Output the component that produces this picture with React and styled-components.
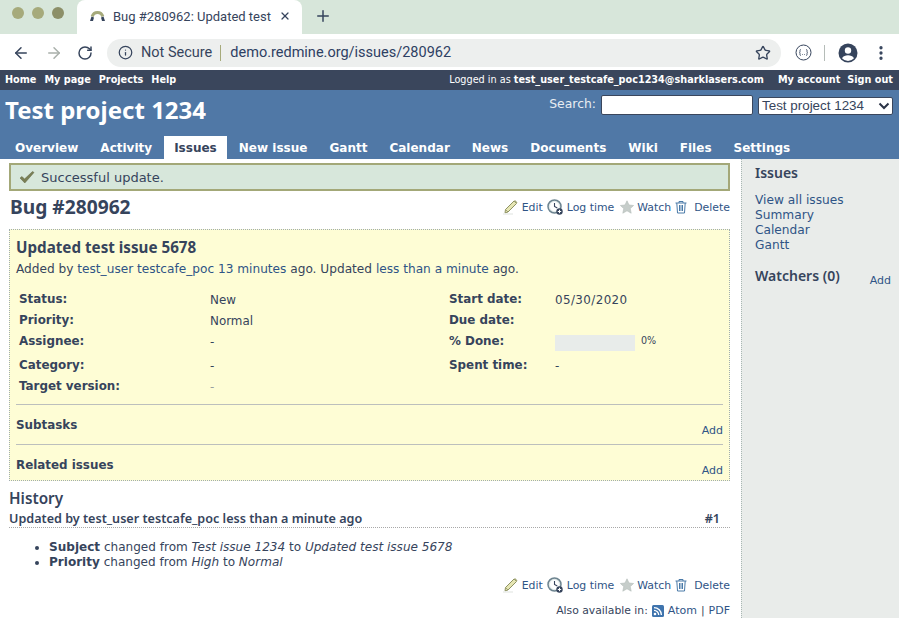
import React from 'react';
import styled, { createGlobalStyle } from 'styled-components';
import { ArrowLeft, ArrowRight, RotateCw, Info, Star, MoreVertical, X, Plus } from 'lucide-react';

const GlobalStyle = createGlobalStyle`
  html, body {
    margin: 0;
    padding: 0;
    background: #fff;
    overflow: hidden;
  }
  * { box-sizing: border-box; }
`;

const verdana = `"DejaVu Sans", Verdana, sans-serif`;
const trebuchet = `"Noto Sans", "Open Sans", sans-serif`;
const ink = '#36445c';
const link = '#2f5486';

const Page = styled.div`
  width: 899px;
  height: 618px;
  overflow: hidden;
  display: flex;
  flex-direction: column;
  font-family: ${verdana};
  color: ${ink};
`;

/* browser chrome */
const TabStrip = styled.div`
  height: 34px;
  flex: none;
  background: #d7e6da;
  display: flex;
  align-items: flex-start;
  padding-left: 12px;
`;

const Lights = styled.div`
  display: flex;
  gap: 8px;
  padding-top: 7px;
  width: 65px;
`;

const Light = styled.span`
  width: 12px;
  height: 12px;
  border-radius: 50%;
  background: ${(p) => (p.$dim ? '#8c8f68' : '#a6aa7b')};
`;

const BrowserTab = styled.div`
  width: 225px;
  height: 34px;
  background: #fff;
  border-radius: 8px 8px 0 0;
  display: flex;
  align-items: center;
  padding: 0 11px 2px 12px;
  font: 13px Roboto, sans-serif;
  color: ${ink};
`;

const TabTitle = styled.span`
  flex: 1;
  margin-left: 7px;
  white-space: nowrap;
`;

const NewTab = styled.div`
  margin: 7px 0 0 12px;
  display: flex;
  color: ${ink};
`;

const AddressRow = styled.div`
  height: 36px;
  flex: none;
  background: #fff;
  display: flex;
  align-items: center;
  padding: 1px 0 0 12px;
  color: ${ink};
`;

const NavButton = styled.div`
  display: flex;
  width: ${(p) => p.$w || 32}px;
  color: ${(p) => (p.$off ? '#a9b0ab' : ink)};
`;

const Omnibox = styled.div`
  width: 674px;
  height: 28px;
  margin-left: 3px;
  border-radius: 14px;
  background: #edefee;
  display: flex;
  align-items: center;
  padding: 0 10px 0 11px;
  font: 14.5px Roboto, sans-serif;
`;

const NotSecure = styled.span`
  margin-left: 8px;
  padding-right: 8px;
  border-right: 1px solid #a6aa7b;
  line-height: 16px;
  color: #36445c;
`;

const Url = styled.span`
  margin-left: 9px;
  flex: 1;
  color: #2d4063;
`;

const ToolButton = styled.div`
  display: flex;
  margin-left: ${(p) => p.$ml || 0}px;
`;

const ToolDivider = styled.span`
  width: 1px;
  height: 16px;
  margin: 0 13px 0 12px;
  background: #b5bcb8;
`;

/* redmine top menu */
const TopMenu = styled.div`
  height: 20px;
  flex: none;
  background: #3a465c;
  color: #fff;
  display: flex;
  align-items: center;
  justify-content: space-between;
  padding: 0 6px 1px 5px;
  font-size: 9.7px;
  white-space: nowrap;
`;

const MenuLinks = styled.div`
  display: flex;
  gap: ${(p) => p.$gap || 8}px;
  font-weight: bold;
`;

const LoggedAs = styled.div`
  display: flex;
  align-items: center;
  margin-left: auto;
  margin-right: 14px;
  strong { margin-left: 3px; }
`;

const Header = styled.div`
  height: 69px;
  flex: none;
  background: #5078a6;
  display: flex;
  flex-direction: column;
`;

const HeaderTop = styled.div`
  height: 46px;
  display: flex;
  justify-content: space-between;
  padding: 0 6px 0 5px;
`;

const ProjectTitle = styled.h1`
  margin: 3px 0 0;
  font: bold 24px/34px ${trebuchet};
  color: #fff;
  white-space: nowrap;
`;

const SearchForm = styled.div`
  display: flex;
  align-items: flex-start;
  padding-top: 5px;
  color: #e8edf2;
  font-size: 12.4px;
`;

const SearchLabel = styled.label`
  line-height: 18px;
  margin-right: 5px;
`;

const SearchInput = styled.input`
  width: 152px;
  height: 20px;
  border: 1px solid #3a465c;
  border-radius: 2px;
  background: #fff;
  padding: 0;
`;

const ProjectSelect = styled.div`
  width: 135px;
  height: 18px;
  margin: 2px 0 0 5px;
  background: #fff;
  border: 1px solid #3a465c;
  border-radius: 2px;
  display: flex;
  align-items: center;
  justify-content: space-between;
  padding: 0 2px 1px 3px;
  font: 13.4px "Liberation Sans", Arial, sans-serif;
  color: #36445c;
`;

const Tabs = styled.nav`
  height: 23px;
  display: flex;
  gap: 2px;
  padding-left: 5px;
`;

const TabLink = styled.a`
  height: 23px;
  padding: 0 10px;
  font: bold 12.03px/24px ${verdana};
  color: ${(p) => (p.$active ? '#36445c' : '#fff')};
  background: ${(p) => (p.$active ? '#fff' : 'transparent')};
  white-space: nowrap;
`;

/* page body */
const Body = styled.div`
  flex: 1;
  display: flex;
  min-height: 0;
`;

const Content = styled.main`
  width: 741px;
  padding: 4px 11px 0 9px;
  font-size: 12.05px;
`;

const Sidebar = styled.aside`
  width: 158px;
  background: #e9ecea;
  border-left: 1px dotted #a9b8b4;
  padding: 5px 8px 0 13px;
  font-size: 12px;
`;

const Flash = styled.div`
  height: 28px;
  border: 2px solid #a3a878;
  background: #d7e7db;
  display: flex;
  align-items: center;
  padding-left: 8px;
  font-size: 13px;
  color: #36445c;
  gap: 6px;
`;

const TitleRow = styled.div`
  height: 38px;
  padding-bottom: 6px;
  display: flex;
  align-items: center;
  justify-content: space-between;
`;

const BugTitle = styled.h2`
  margin: 0;
  font: bold 19.2px/26px ${trebuchet};
  color: #36445c;
  padding-left: 1px;
`;

const Actions = styled.div`
  display: flex;
  align-items: center;
  font-size: 10.9px;
  color: ${link};
  white-space: nowrap;
`;

const Action = styled.a`
  display: flex;
  align-items: center;
  margin-left: ${(p) => p.$ml ?? 5}px;
  gap: ${(p) => p.$gap ?? 4}px;
`;

const IssueBox = styled.section`
  height: 252px;
  background: #fefdd5;
  border: 1px dotted #a0adb0;
  padding: 8px 6px 0;
  overflow: hidden;
`;

const IssueSubject = styled.h3`
  margin: 0;
  font: bold 15.2px/18px ${trebuchet};
  color: #36445c;
`;

const Author = styled.p`
  margin: 6px 0 0;
  line-height: 14px;
  font-size: 12.15px;
  white-space: nowrap;
  a { color: ${link}; }
`;

const AttrGrid = styled.div`
  margin-top: 16px;
  padding-left: 3px;
  display: grid;
  grid-template-columns: 191px 239px 106px 1fr;
  grid-template-rows: 21px 21px 24px 21px 19px;
  height: 112px;
`;

const AttrLabel = styled.div`
  font: bold 11.9px/15px ${verdana};
`;

const AttrValue = styled.div`
  font-size: 11.9px;
  line-height: 15px;
  padding-top: 1px;
  letter-spacing: ${(p) => (p.$date ? '0.4px' : '0')};
  color: ${(p) => (p.$faint ? '#9aa0a0' : ink)};
`;

const ProgressCell = styled.div`
  display: flex;
  align-items: flex-start;
  gap: 6px;
`;

const ProgressBar = styled.div`
  width: 80px;
  height: 16px;
  margin-top: 1px;
  background: #e8ecea;
`;

const Percent = styled.span`
  font-size: 9.6px;
  line-height: 12px;
  margin-top: 1px;
`;

const Relation = styled.div`
  height: 40px;
  border-top: 1px solid #bcbfbd;
  display: flex;
  justify-content: space-between;
  padding-top: 13px;
  font: bold 11.9px/15px ${verdana};
`;

const RelationAdd = styled.a`
  align-self: flex-end;
  font-weight: normal;
  font-size: 11px;
  line-height: 13px;
  color: ${link};
  margin-bottom: 7px;
`;

const HistoryTitle = styled.h3`
  margin: 7px 0 0;
  font: 600 15.3px/20px ${trebuchet};
  color: #36445c;
`;

const JournalHead = styled.div`
  height: 19px;
  margin-top: 1px;
  display: flex;
  justify-content: space-between;
  padding-right: 10px;
  border-bottom: 1px dotted #a8a8a8;
  font: 600 12.6px/20px ${trebuchet};
`;

const Changes = styled.ul`
  margin: 12px 0 0;
  padding-left: 40px;
  line-height: 15px;
  height: 30px;
`;

const FooterActions = styled(Actions)`
  justify-content: flex-end;
  margin-top: 6px;
  height: 18px;
`;

const AlsoAvailable = styled.div`
  display: flex;
  justify-content: flex-end;
  align-items: center;
  gap: 4px;
  margin-top: 10px;
  font-size: 10.8px;
  white-space: nowrap;
  a { color: ${link}; font-size: 11px; }
`;

const SideHeading = styled.h3`
  margin: 0;
  font: 600 14px/18px ${trebuchet};
  color: #36445c;
`;

const SideLinks = styled.div`
  margin-top: 11px;
  display: flex;
  flex-direction: column;
  font-size: 12.2px;
  line-height: 15px;
  color: ${link};
`;

const WatchersRow = styled.div`
  margin-top: 14px;
  display: flex;
  justify-content: space-between;
  align-items: flex-end;
`;

const WatchersAdd = styled.a`
  font-size: 11px;
  line-height: 13px;
  margin-bottom: -2px;
  color: ${link};
`;

const PencilIcon = () => (
  <svg width="15" height="16" viewBox="0 0 15 16">
    <path d="M2.500 10.500 11 2l2.500 2.500L5 13l-3 .8z" fill="#e6e6b4" stroke="#8f9363" strokeWidth="1" />
    <path d="M11 2l1-1 2.500 2.500-1 1z" fill="#a6aa7b" />
    <path d="M2.500 10.500 5 13" stroke="#8f9363" strokeWidth=".8" />
    <path d="M0 15h10" stroke="#dfe3df" strokeWidth="1" />
  </svg>
);

const ClockIcon = () => (
  <svg width="16" height="16" viewBox="0 0 16 16">
    <circle cx="7.500" cy="7.500" r="6.500" fill="#e3eaea" stroke="#6d8490" strokeWidth="1.500" />
    <circle cx="7.500" cy="7.500" r="4.500" fill="#fff" />
    <path d="M7.500 4v3.500l2.800 1.500" fill="none" stroke="#36445c" strokeWidth="1.100" />
    <circle cx="12.500" cy="12.500" r="3.200" fill="#36445c" />
    <path d="M12.500 10.800v3.400M10.800 12.500h3.400" stroke="#fff" strokeWidth="1" />
  </svg>
);

const WatchIcon = () => (
  <svg width="14" height="14" viewBox="0 0 14 14">
    <path d="M7 .8 9 5l4.600.5-3.400 3.100 1 4.600L7 10.800l-4.200 2.400 1-4.600L.4 5.500 5 5z" fill="#c6cdca" stroke="#b4bcb8" strokeWidth=".6" />
  </svg>
);

const TrashIcon = () => (
  <svg width="12" height="14" viewBox="0 0 12 14" fill="none" stroke="#4a7aa8" strokeWidth="1">
    <path d="M.5 3h11M4 3V1.500h4V3M1.800 3l.7 10h7l.7-10M4.500 5v6M6 5v6M7.500 5v6" />
  </svg>
);

const CheckIcon = () => (
  <svg width="16" height="14" viewBox="0 0 16 14">
    <path d="M1 8l2-1.500 2.500 2.500L13.500 1.500 15 2.500 5.800 13z" fill="#7a7f55" stroke="#5f6340" strokeWidth=".5" />
  </svg>
);

const RssIcon = () => (
  <svg width="12" height="12" viewBox="0 0 12 12">
    <rect width="12" height="12" rx="1.500" fill="#3f74ad" />
    <circle cx="3" cy="9" r="1.300" fill="#fff" />
    <path d="M2 5.300a4.700 4.700 0 0 1 4.700 4.700M2 2.600A7.400 7.400 0 0 1 9.400 10" fill="none" stroke="#fff" strokeWidth="1.300" />
  </svg>
);

const FaviconArc = () => (
  <svg width="17" height="14" viewBox="0 0 17 14">
    <path d="M3.200 7.500A5.500 5.500 0 0 1 13.800 7.500" fill="none" stroke="#a6aa7b" strokeWidth="3" />
    <path d="M1 12l1.500-4.500 2.500 1-1 3.500zM16 12l-1.500-4.500-2.500 1 1 3.500z" fill="#36445c" />
  </svg>
);

const ExtensionIcon = () => (
  <svg width="17" height="17" viewBox="0 0 17 17" fill="none" stroke="#36445c">
    <circle cx="8.500" cy="8.500" r="7.500" strokeWidth="1" />
    <path d="M5.800 5.500c-1 0-.8 1-.8 2s-.5 1-.5 1 .5 0 .5 1-.2 2 .8 2M11.200 5.500c1 0 .8 1 .8 2s.5 1 .5 1-.5 0-.5 1 .2 2-.8 2" strokeWidth=".9" />
    <path d="M7.200 10.500h.6M9.200 10.500h.6" strokeWidth="1" />
  </svg>
);

const AccountIcon = () => (
  <svg width="20" height="20" viewBox="0 0 20 20">
    <circle cx="10" cy="10" r="9.500" fill="#36445c" />
    <circle cx="10" cy="7.500" r="3.200" fill="#fff" />
    <path d="M4 15.200c1.200-2.200 3.600-3 6-3s4.800.8 6 3A8 8 0 0 1 4 15.200z" fill="#fff" />
  </svg>
);

const SelectChevron = () => (
  <svg width="12" height="8" viewBox="0 0 12 8" fill="none" stroke="#2a3346" strokeWidth="2">
    <path d="M1.500 1.500 6 6l4.500-4.500" />
  </svg>
);

const ActionBar = ({ as: Bar = Actions }) => (
  <Bar>
    <Action $gap={4}><PencilIcon />Edit</Action>
    <Action $ml={4} $gap={4}><ClockIcon />Log time</Action>
    <Action $ml={6} $gap={3}><WatchIcon />Watch</Action>
    <Action $ml={4} $gap={7}><TrashIcon />Delete</Action>
  </Bar>
);

const attributes = [
  ['Status:', 'New', 'Start date:', '05/30/2020'],
  ['Priority:', 'Normal', 'Due date:', ''],
  ['Assignee:', '-', '% Done:', null],
  ['Category:', '-', 'Spent time:', '-'],
  ['Target version:', '-', '', ''],
];

const topLinks = ['Home', 'My page', 'Projects', 'Help'];
const tabs = ['Overview', 'Activity', 'Issues', 'New issue', 'Gantt', 'Calendar', 'News', 'Documents', 'Wiki', 'Files', 'Settings'];
const sideLinks = ['View all issues', 'Summary', 'Calendar', 'Gantt'];

export default function App() {
  return (
    <Page>
      <GlobalStyle />
      <TabStrip>
        <Lights>
          <Light />
          <Light />
          <Light $dim />
        </Lights>
        <BrowserTab>
          <FaviconArc />
          <TabTitle>Bug #280962: Updated test</TabTitle>
          <X size={12} strokeWidth={2.5} />
        </BrowserTab>
        <NewTab>
          <Plus size={18} strokeWidth={2} />
        </NewTab>
      </TabStrip>
      <AddressRow>
        <NavButton $w={33}><ArrowLeft size={18} strokeWidth={2} /></NavButton>
        <NavButton $w={32} $off><ArrowRight size={18} strokeWidth={2} /></NavButton>
        <NavButton $w={27}><RotateCw size={16} strokeWidth={2.2} /></NavButton>
        <Omnibox>
          <Info size={15} strokeWidth={2} />
          <NotSecure>Not Secure</NotSecure>
          <Url>demo.redmine.org/issues/280962</Url>
          <Star size={16} strokeWidth={2} />
        </Omnibox>
        <ToolButton $ml={14}><ExtensionIcon /></ToolButton>
        <ToolDivider />
        <ToolButton><AccountIcon /></ToolButton>
        <ToolButton $ml={14}><MoreVertical size={18} strokeWidth={2.4} /></ToolButton>
      </AddressRow>
      <TopMenu>
        <MenuLinks>
          {topLinks.map((l) => <span key={l}>{l}</span>)}
        </MenuLinks>
        <LoggedAs>Logged in as <strong>test_user_testcafe_poc1234@sharklasers.com</strong></LoggedAs>
        <MenuLinks $gap={7}>
          <span>My account</span>
          <span>Sign out</span>
        </MenuLinks>
      </TopMenu>
      <Header>
        <HeaderTop>
          <ProjectTitle>Test project 1234</ProjectTitle>
          <SearchForm>
            <SearchLabel>Search:</SearchLabel>
            <SearchInput />
            <ProjectSelect>Test project 1234<SelectChevron /></ProjectSelect>
          </SearchForm>
        </HeaderTop>
        <Tabs>
          {tabs.map((t) => <TabLink key={t} $active={t === 'Issues'}>{t}</TabLink>)}
        </Tabs>
      </Header>
      <Body>
        <Content>
          <Flash><CheckIcon />Successful update.</Flash>
          <TitleRow>
            <BugTitle>Bug #280962</BugTitle>
            <ActionBar />
          </TitleRow>
          <IssueBox>
            <IssueSubject>Updated test issue 5678</IssueSubject>
            <Author>
              Added by <a>test_user testcafe_poc</a> <a>13 minutes</a> ago. Updated <a>less than a minute</a> ago.
            </Author>
            <AttrGrid>
              {attributes.map(([l1, v1, l2, v2]) => (
                <React.Fragment key={l1}>
                  <AttrLabel>{l1}</AttrLabel>
                  <AttrValue $faint={l1 === 'Target version:'}>{v1}</AttrValue>
                  <AttrLabel>{l2}</AttrLabel>
                  {v2 === null ? (
                    <ProgressCell>
                      <ProgressBar />
                      <Percent>0%</Percent>
                    </ProgressCell>
                  ) : (
                    <AttrValue $date={l2 === 'Start date:'}>{v2}</AttrValue>
                  )}
                </React.Fragment>
              ))}
            </AttrGrid>
            <Relation>Subtasks<RelationAdd>Add</RelationAdd></Relation>
            <Relation>Related issues<RelationAdd>Add</RelationAdd></Relation>
          </IssueBox>
          <HistoryTitle>History</HistoryTitle>
          <JournalHead>
            <span>Updated by test_user testcafe_poc less than a minute ago</span>
            <span>#1</span>
          </JournalHead>
          <Changes>
            <li><strong>Subject</strong> changed from <i>Test issue 1234</i> to <i>Updated test issue 5678</i></li>
            <li><strong>Priority</strong> changed from <i>High</i> to <i>Normal</i></li>
          </Changes>
          <ActionBar as={FooterActions} />
          <AlsoAvailable>
            Also available in:<RssIcon /><a>Atom</a> | <a>PDF</a>
          </AlsoAvailable>
        </Content>
        <Sidebar>
          <SideHeading>Issues</SideHeading>
          <SideLinks>
            {sideLinks.map((l) => <a key={l}>{l}</a>)}
          </SideLinks>
          <WatchersRow>
            <SideHeading>Watchers (0)</SideHeading>
            <WatchersAdd>Add</WatchersAdd>
          </WatchersRow>
        </Sidebar>
      </Body>
    </Page>
  );
}
